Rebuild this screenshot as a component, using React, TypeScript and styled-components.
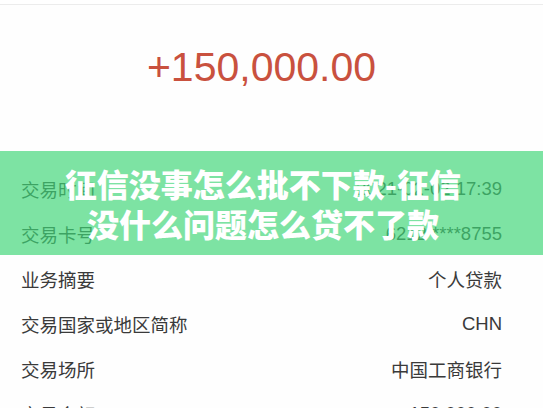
import React from 'react';
import styled, { createGlobalStyle } from 'styled-components';

const GlobalStyle = createGlobalStyle`
  html, body {
    margin: 0;
    padding: 0;
    background: #ffffff;
  }
  body {
    font-family: "Liberation Sans", "Noto Sans CJK SC", sans-serif;
  }
`;

const Page = styled.div`
  position: relative;
  width: 543px;
  height: 408px;
  overflow: hidden;
  background: #fefefe;
`;

const TopBar = styled.div`
  height: 4px;
  border-bottom: 1px solid #ececec;
  background: #ffffff;
`;

const Header = styled.div`
  height: 161px;
  display: flex;
  justify-content: center;
  align-items: flex-start;
  padding-right: 20px;
  box-sizing: border-box;
`;

const Amount = styled.div`
  margin-top: 39px;
  font-size: 41px;
  line-height: 46px;
  color: #c9513e;
`;

const List = styled.div`
  display: flex;
  flex-direction: column;
`;

const Row = styled.div`
  height: 45px;
  display: flex;
  align-items: center;
  justify-content: space-between;
  padding: 0 41px 0 21px;
  font-size: 18.5px;
  color: #3a3a3a;
`;

const Label = styled.span``;
const Value = styled.span``;

const Banner = styled.div`
  position: absolute;
  left: 0;
  right: 0;
  top: 151px;
  height: 104px;
  background: rgba(64, 214, 120, 0.68);
  display: flex;
  flex-direction: column;
  align-items: center;
  justify-content: center;
  padding-right: 17px;
  box-sizing: border-box;
`;

const BannerLine = styled.div`
  font-family: "Noto Sans CJK SC", sans-serif;
  font-weight: 900;
  font-size: 32px;
  line-height: 40px;
  color: #ffffff;
  white-space: nowrap;
`;

const rows: [string, string][] = [
  ['交易时间', '2021-02-02 17:39'],
  ['交易卡号', '6212 ****8755'],
  ['业务摘要', '个人贷款'],
  ['交易国家或地区简称', 'CHN'],
  ['交易场所', '中国工商银行'],
  ['交易金额', '150,000.00'],
];

export default function App() {
  return (
    <Page>
      <GlobalStyle />
      <TopBar />
      <Header>
        <Amount>+150,000.00</Amount>
      </Header>
      <List>
        {rows.map(([label, value]) => (
          <Row key={label}>
            <Label>{label}</Label>
            <Value>{value}</Value>
          </Row>
        ))}
      </List>
      <Banner>
        <BannerLine>征信没事怎么批不下款-征信</BannerLine>
        <BannerLine>没什么问题怎么贷不了款</BannerLine>
      </Banner>
    </Page>
  );
}
